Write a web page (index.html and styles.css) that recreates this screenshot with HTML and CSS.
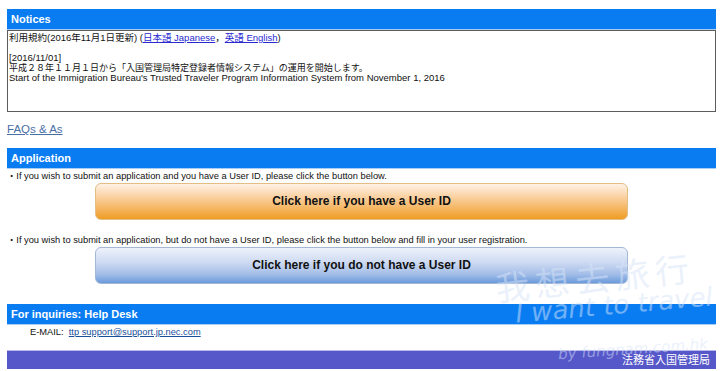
FILE: index.html
```html
<!DOCTYPE html>
<html lang="ja">
  <head>
    <meta charset="UTF-8" />
    <title>Trusted Traveler Program</title>
    <link rel="stylesheet" href="styles.css">
  </head>
  <body>
    <div class="page">
      <div class="bar">Notices</div>
      <div class="notice-box">
        利用規約(2016年11月1日更新) (<a href="#">日本語 Japanese</a>，<a href="#">英語 English</a>)<br>
        <br>
        [2016/11/01]<br>
        <span class="jp">平成２８年１１月１日から「入国管理局特定登録者情報システム」の運用を開始します。</span><br>
        Start of the Immigration Bureau's Trusted Traveler Program Information System from November 1, 2016
      </div>

      <a class="faq" href="#">FAQs &amp; As</a>

      <div class="bar bar-app">Application</div>
      <p class="note">・If you wish to submit an application and you have a User ID, please click the button below.</p>
      <div class="btn-row">
        <a class="big-btn orange" href="#">Click here if you have a User ID</a>
      </div>
      <p class="note note-second">・If you wish to submit an application, but do not have a User ID, please click the button below and fill in your user registration.</p>
      <div class="btn-row">
        <a class="big-btn blue" href="#">Click here if you do not have a User ID</a>
      </div>

      <div class="bar bar-help">For inquiries: Help Desk</div>
      <p class="mail">E-MAIL:&nbsp; <a href="#">ttp support@support.jp.nec.com</a></p>

      <div class="footer">法務省入国管理局</div>
    </div>

    <!-- photo watermark on top of the screenshot -->
    <div class="wm wm-cn">我想去旅行</div>
    <div class="wm wm-en">I want to travel</div>
    <div class="wm wm-by">by fungnam.com.hk</div>
  </body>
</html>
```

FILE: styles.css
```css
body {
  margin: 0;
  background-color: #fff;
  font-family: "Liberation Sans", "Noto Sans CJK JP", sans-serif;
  color: #111;
  position: relative;
  overflow: hidden;
}

.page {
  margin: 9px 4px 0 7px;
}

.bar {
  background-color: #0a7cf2;
  color: #fff;
  font-weight: bold;
  font-size: 11px;
  height: 20px;
  line-height: 20px;
  padding-left: 4px;
  border-bottom: 1px solid #a9cdf5;
}

.notice-box {
  border: 1px solid #5c5c5c;
  height: 76px;
  padding: 2px 1px;
  font-size: 9.5px;
  line-height: 10px;
}

.notice-box a {
  color: #2a2ad0;
}

.notice-box .jp {
  font-size: 9px;
}

.faq {
  display: inline-block;
  margin-top: 11px;
  font-size: 11.5px;
  line-height: 12px;
  color: #4a6fa6;
}

.bar-app {
  margin-top: 11px;
}

.note {
  margin: 2px 0 0;
  font-size: 9.3px;
  line-height: 10px;
}

.note-second {
  margin-top: 15px;
}

.btn-row {
  padding-left: 88px;
  margin-top: 2px;
}

.big-btn {
  display: block;
  width: 531px;
  height: 35px;
  line-height: 35px;
  border-radius: 6px;
  text-align: center;
  font-weight: bold;
  font-size: 12px;
  color: #111;
  text-decoration: none;
}

.orange {
  border: 1px solid #e2bd86;
  background: linear-gradient(#fef2e6 0%, #fbd3a5 35%, #f4b158 75%, #ef9d23 100%);
}

.blue {
  border: 1px solid #a5b7d6;
  background: linear-gradient(#eef2fb 0%, #cfdbf2 40%, #a3bde8 75%, #6b9bdb 100%);
}

.bar-help {
  margin-top: 20px;
}

.mail {
  margin: 2px 0 0 23px;
  font-size: 9.3px;
  line-height: 10px;
}

.mail a {
  color: #1a4f9a;
}

.footer {
  margin-top: 13px;
  height: 18px;
  line-height: 18px;
  background-color: #5657c9;
  border-top: 1px solid #b8b9ea;
  color: #fff;
  font-size: 11px;
  text-align: right;
  padding-right: 6px;
}

.wm {
  position: absolute;
  color: rgba(215, 228, 248, 0.5);
  font-family: "DejaVu Sans", "Noto Sans CJK SC", sans-serif;
  white-space: nowrap;
  pointer-events: none;
}

.wm-cn {
  left: 495px;
  top: 252px;
  font-size: 34px;
  letter-spacing: 6px;
  transform: rotate(-6deg);
}

.wm-en {
  left: 515px;
  top: 290px;
  font-size: 26px;
  font-style: italic;
  transform: rotate(-5deg);
}

.wm-by {
  left: 558px;
  top: 340px;
  font-size: 15px;
  font-style: italic;
  transform: rotate(-4deg);
}
```
